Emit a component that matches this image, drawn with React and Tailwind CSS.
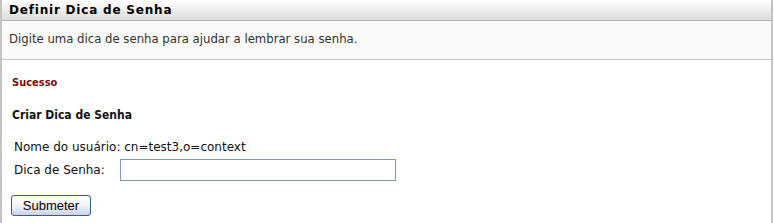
export default function App() {
  return (
    <div className="w-[774px] h-[223px] bg-white font-['DejaVu_Sans',sans-serif] text-[#222]">
      <div className="w-[773px] h-[223px] border-l-2 border-r-2 border-[#c4c4c4] flex flex-col">
        {/* header */}
        <div className="h-[21px] bg-gradient-to-b from-white to-[#dcddd8] border-b border-[#b5b6b1] flex items-center px-[7px]">
          <span className="text-[12px] font-bold tracking-[0.8px] text-black">Definir Dica de Senha</span>
        </div>
        {/* description */}
        <div className="h-[39px] bg-[#fafaf8] border-b border-[#c6c6c4] flex items-center px-[7px]">
          <span className="text-[11.7px] text-[#333]">Digite uma dica de senha para ajudar a lembrar sua senha.</span>
        </div>
        <div className="px-[10px] pt-[15px] flex flex-col">
          <span className="text-[11px] font-bold text-[#7b0c0c] font-['DejaVu_Sans_Condensed','DejaVu_Sans',sans-serif]">Sucesso</span>
          <span className="mt-[14px] text-[12px] font-bold text-[#111] font-['DejaVu_Sans_Condensed','DejaVu_Sans',sans-serif]">Criar Dica de Senha</span>
          <div className="mt-[14px] pl-[2px] text-[12px] text-[#111]">
            Nome do usuário: cn=test3,o=context
          </div>
          <div className="mt-[3px] pl-[2px] flex items-center">
            <span className="w-[106px] text-[12px] text-[#111]">Dica de Senha:</span>
            <input
              type="text"
              className="w-[276px] h-[22px] border border-[#7f9db9] bg-white outline-none px-1"
            />
          </div>
          <div className="mt-[12px] -ml-px">
            <button className="w-[80px] h-[21px] rounded-[3px] border border-[#3c5a88] bg-gradient-to-b from-white via-[#f3f4f8] to-[#c9d3e6] text-[13px] text-black font-['Liberation_Sans',Arial,sans-serif] leading-none">
              Submeter
            </button>
          </div>
        </div>
      </div>
    </div>
  );
}
